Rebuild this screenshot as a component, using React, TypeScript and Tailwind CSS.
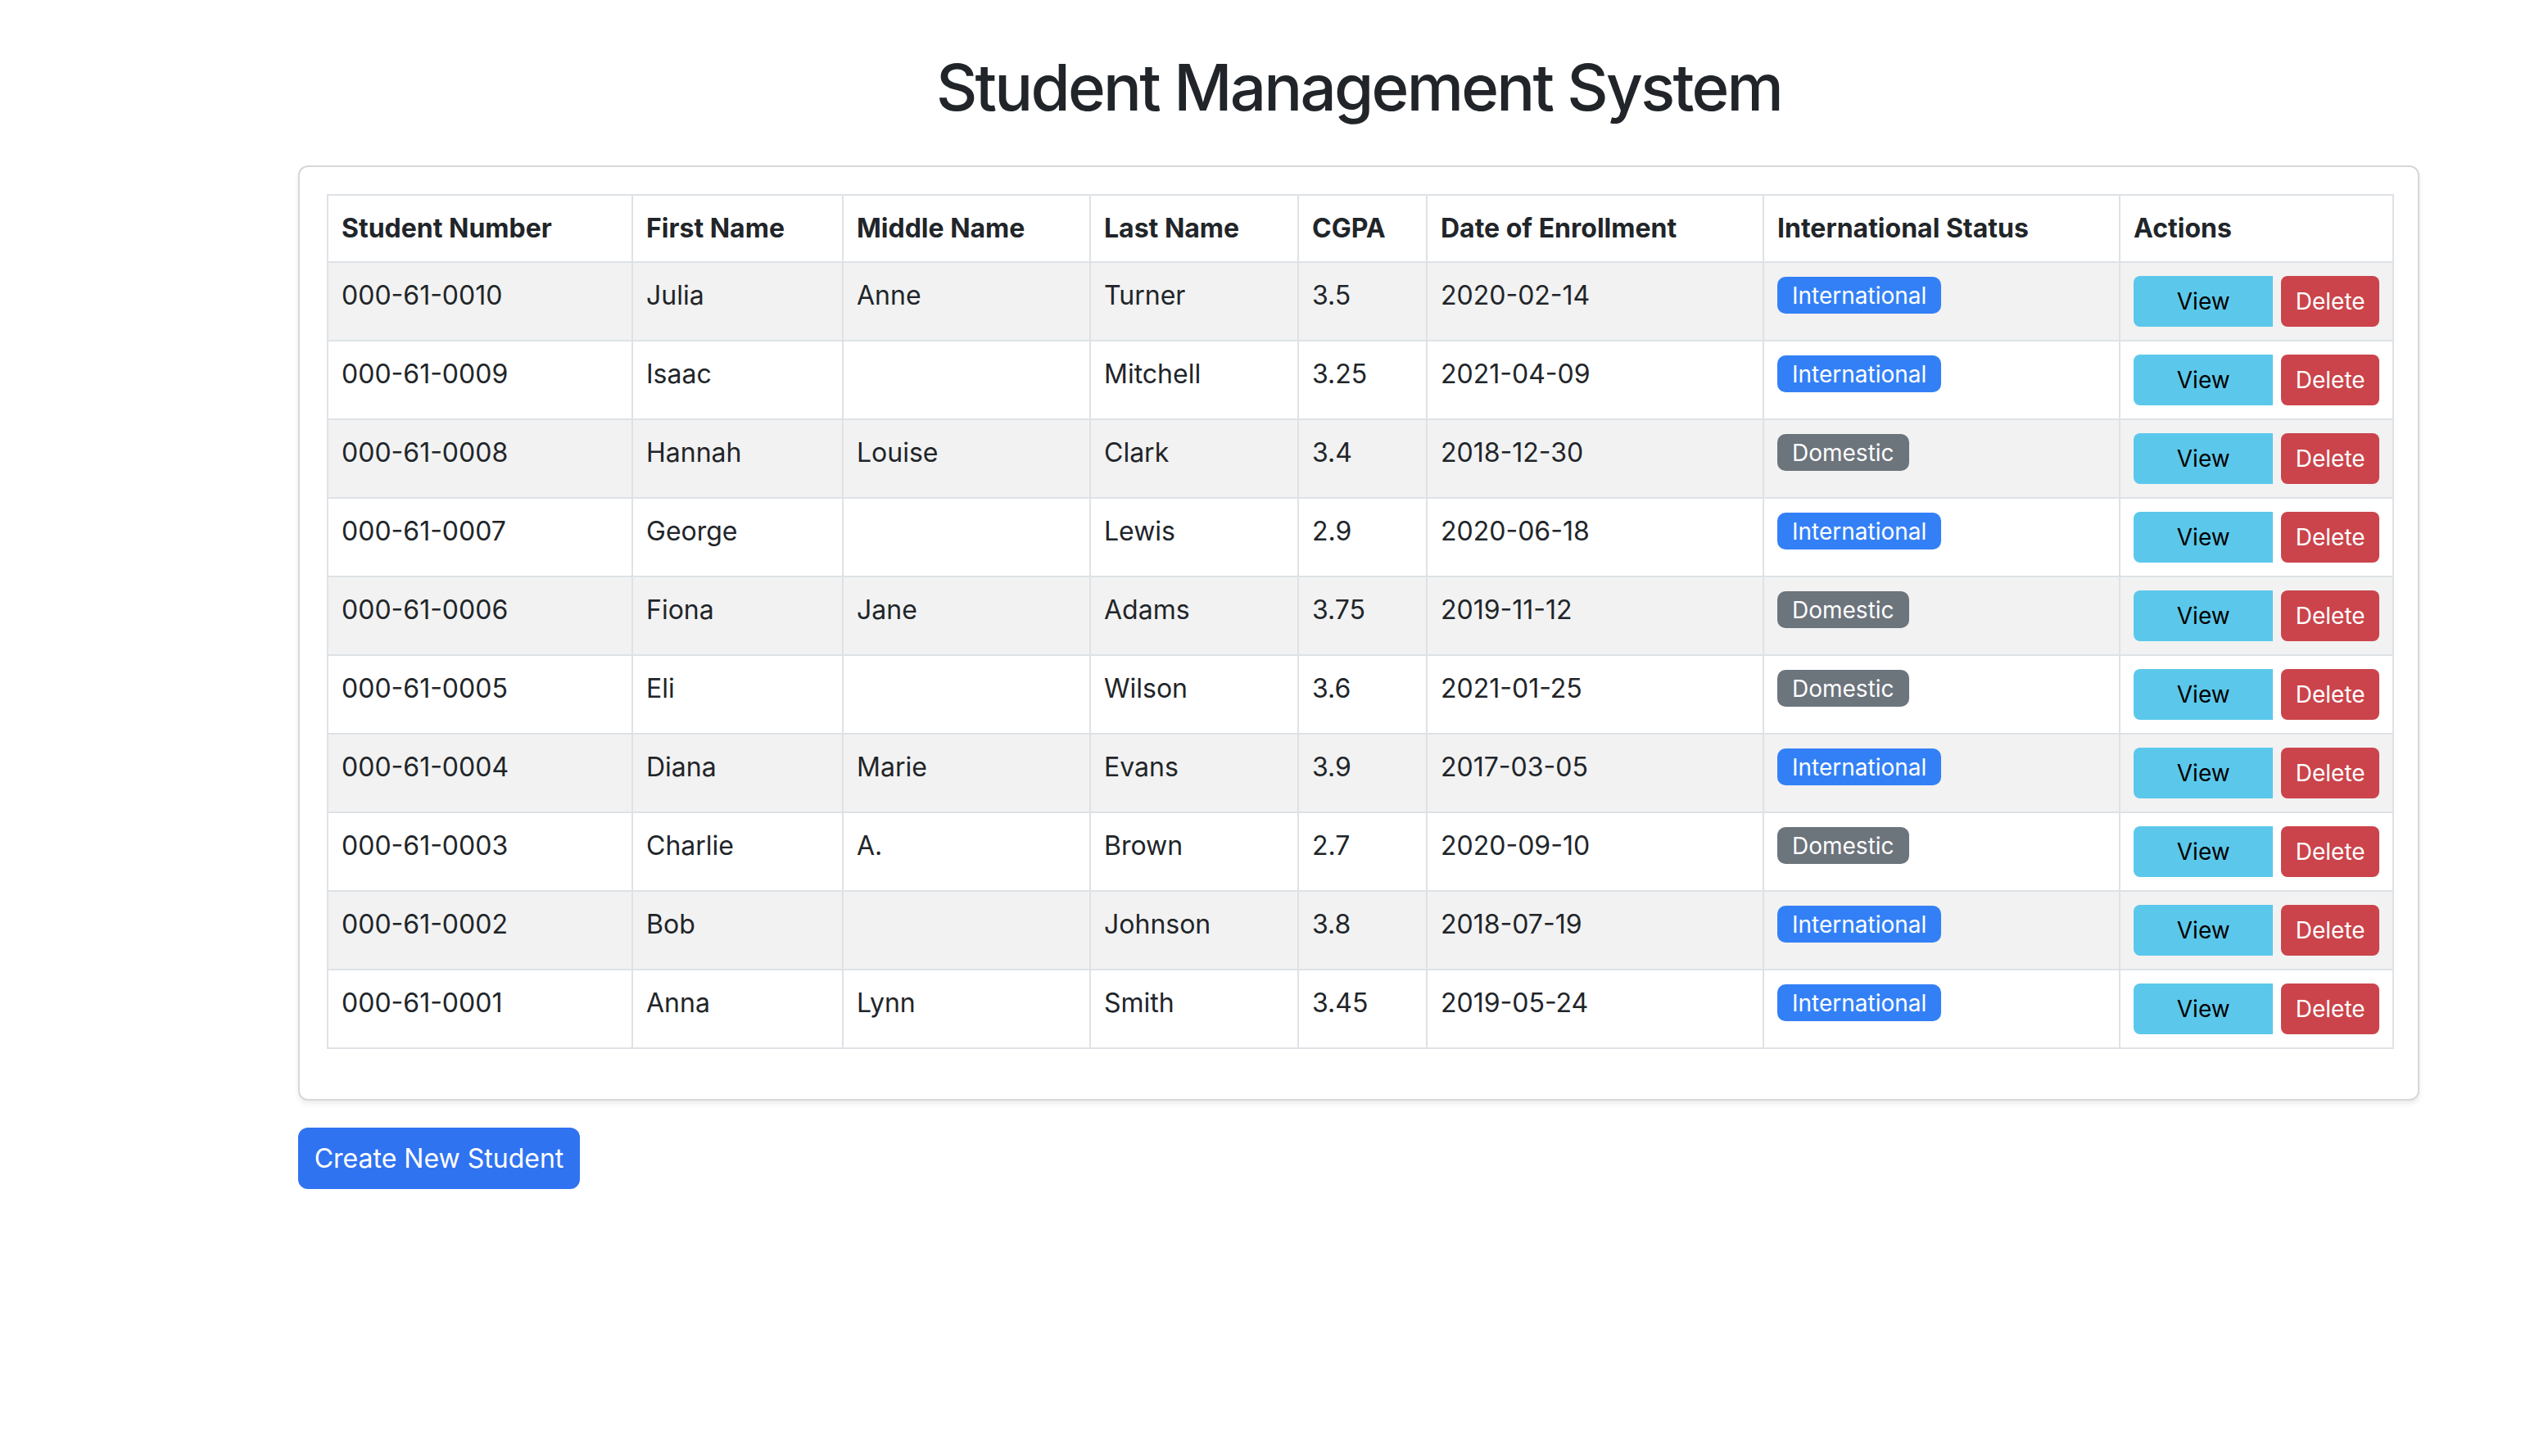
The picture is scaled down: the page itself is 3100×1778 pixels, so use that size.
type Student = {
  number: string
  first: string
  middle: string
  last: string
  cgpa: string
  enrolled: string
  international: boolean
}

const students: Student[] = [
  { number: '000-61-0010', first: 'Julia', middle: 'Anne', last: 'Turner', cgpa: '3.5', enrolled: '2020-02-14', international: true },
  { number: '000-61-0009', first: 'Isaac', middle: '', last: 'Mitchell', cgpa: '3.25', enrolled: '2021-04-09', international: true },
  { number: '000-61-0008', first: 'Hannah', middle: 'Louise', last: 'Clark', cgpa: '3.4', enrolled: '2018-12-30', international: false },
  { number: '000-61-0007', first: 'George', middle: '', last: 'Lewis', cgpa: '2.9', enrolled: '2020-06-18', international: true },
  { number: '000-61-0006', first: 'Fiona', middle: 'Jane', last: 'Adams', cgpa: '3.75', enrolled: '2019-11-12', international: false },
  { number: '000-61-0005', first: 'Eli', middle: '', last: 'Wilson', cgpa: '3.6', enrolled: '2021-01-25', international: false },
  { number: '000-61-0004', first: 'Diana', middle: 'Marie', last: 'Evans', cgpa: '3.9', enrolled: '2017-03-05', international: true },
  { number: '000-61-0003', first: 'Charlie', middle: 'A.', last: 'Brown', cgpa: '2.7', enrolled: '2020-09-10', international: false },
  { number: '000-61-0002', first: 'Bob', middle: '', last: 'Johnson', cgpa: '3.8', enrolled: '2018-07-19', international: true },
  { number: '000-61-0001', first: 'Anna', middle: 'Lynn', last: 'Smith', cgpa: '3.45', enrolled: '2019-05-24', international: true },
]

const headers = [
  'Student Number',
  'First Name',
  'Middle Name',
  'Last Name',
  'CGPA',
  'Date of Enrollment',
  'International Status',
  'Actions',
]

const colWidths = ['w-[372px]', 'w-[257px]', 'w-[302px]', 'w-[254px]', 'w-[157px]', 'w-[411px]', 'w-[435px]', 'w-[334px]']

const cell = 'border-2 border-[#dee2e6] px-4 py-4 align-top text-left'

function StatusBadge({ international }: { international: boolean }) {
  return (
    <span
      className={
        'mt-[1px] inline-flex h-[45px] items-center rounded-[10px] px-[18px] align-top text-[28px] leading-none text-white ' +
        (international ? 'bg-[#3380f6]' : 'bg-[#6c747c]')
      }
    >
      {international ? 'International' : 'Domestic'}
    </span>
  )
}

export default function App() {
  return (
    <div className="min-h-[1778px] bg-white font-[Inter,'Noto_Sans',sans-serif] text-[#212529]">
      <div className="ml-[364px] w-[2590px]">
        {/* 標題 */}
        <h1 className="pt-[59px] pb-[47px] text-center text-[78px] font-medium leading-[96px] tracking-[-0.035em]">
          Student Management System
        </h1>

        {/* 學生表格 */}
        <div className="rounded-[12px] border-2 border-[#d8d8d8] bg-white px-[33px] pt-[33px] pb-[61px] shadow-[0_4px_6px_rgba(0,0,0,0.08)]">
          <table className="w-[2522px] table-fixed border-collapse text-[32px] leading-[48px]">
            <colgroup>
              {colWidths.map((w, i) => (
                <col key={i} className={w} />
              ))}
            </colgroup>
            <thead>
              <tr className="bg-white">
                {headers.map((h) => (
                  <th key={h} className={cell + ' font-bold'}>
                    {h}
                  </th>
                ))}
              </tr>
            </thead>
            <tbody>
              {students.map((s, i) => (
                <tr key={s.number} className={i % 2 === 0 ? 'bg-[#f2f2f2]' : 'bg-white'}>
                  <td className={cell}>{s.number}</td>
                  <td className={cell}>{s.first}</td>
                  <td className={cell}>{s.middle}</td>
                  <td className={cell}>{s.last}</td>
                  <td className={cell}>{s.cgpa}</td>
                  <td className={cell}>{s.enrolled}</td>
                  <td className={cell}>
                    <StatusBadge international={s.international} />
                  </td>
                  <td className={cell}>
                    <div className="flex gap-[10px]">
                      <button className="flex h-[62px] w-[171px] items-center justify-center rounded-l-[8px] bg-[#5bc8eb] text-[28px] text-black">
                        View
                      </button>
                      <button className="flex h-[62px] w-[120px] items-center justify-center rounded-[8px] bg-[#cb444b] text-[28px] text-white">
                        Delete
                      </button>
                    </div>
                  </td>
                </tr>
              ))}
            </tbody>
          </table>
        </div>

        <button className="mt-[33px] flex h-[75px] w-[344px] items-center justify-center rounded-[12px] bg-[#2f73f1] text-[32px] text-white">
          Create New Student
        </button>
      </div>
    </div>
  )
}
